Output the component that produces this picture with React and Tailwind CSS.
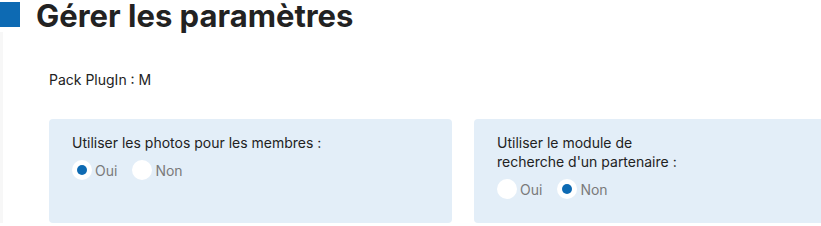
import React from 'react';

function Radio({ label, checked }) {
  return (
    <label className="flex items-center">
      <span className="w-[20px] h-[20px] rounded-full bg-white flex items-center justify-center">
        {checked && <span className="w-[10px] h-[10px] rounded-full bg-[#0d6ab3]" />}
      </span>
      <span className="ml-[3px] text-[14px] leading-[19px] text-[#7a7a7a]">{label}</span>
    </label>
  );
}

function OptionCard({ children, value }) {
  return (
    <div className="w-[403px] h-[104px] shrink-0 rounded-[4px] bg-[#e3eef8] pl-[23px] pt-[14px]">
      <div className="text-[14px] leading-[19px] text-[#222]">{children}</div>
      <div className="mt-[8px] flex items-center gap-[15px]">
        <Radio label="Oui" checked={value === 'oui'} />
        <Radio label="Non" checked={value === 'non'} />
      </div>
    </div>
  );
}

export default function App() {
  return (
    <div className="w-[821px] h-[226px] overflow-hidden bg-white font-['Inter',sans-serif]">
      {/* Header */}
      <div className="flex items-start">
        <div className="w-[20px] h-[25px] mt-[2px] bg-[#0d6ab3]" />
        <h1 className="ml-[16px] text-[31px] leading-[32px] font-bold text-[#222]">
          Gérer les paramètres
        </h1>
      </div>

      <div className="border-l-[3px] border-[#f7f7f7] pl-[46px]">
        <p className="pt-[39px] text-[14px] leading-[18px] text-[#222]">Pack PlugIn : M</p>

        <div className="mt-[30px] flex gap-[22px]">
          <OptionCard value="oui">Utiliser les photos pour les membres :</OptionCard>
          <OptionCard value="non">
            <div className="w-[190px]">Utiliser le module de recherche d'un partenaire :</div>
          </OptionCard>
        </div>
      </div>
    </div>
  );
}
